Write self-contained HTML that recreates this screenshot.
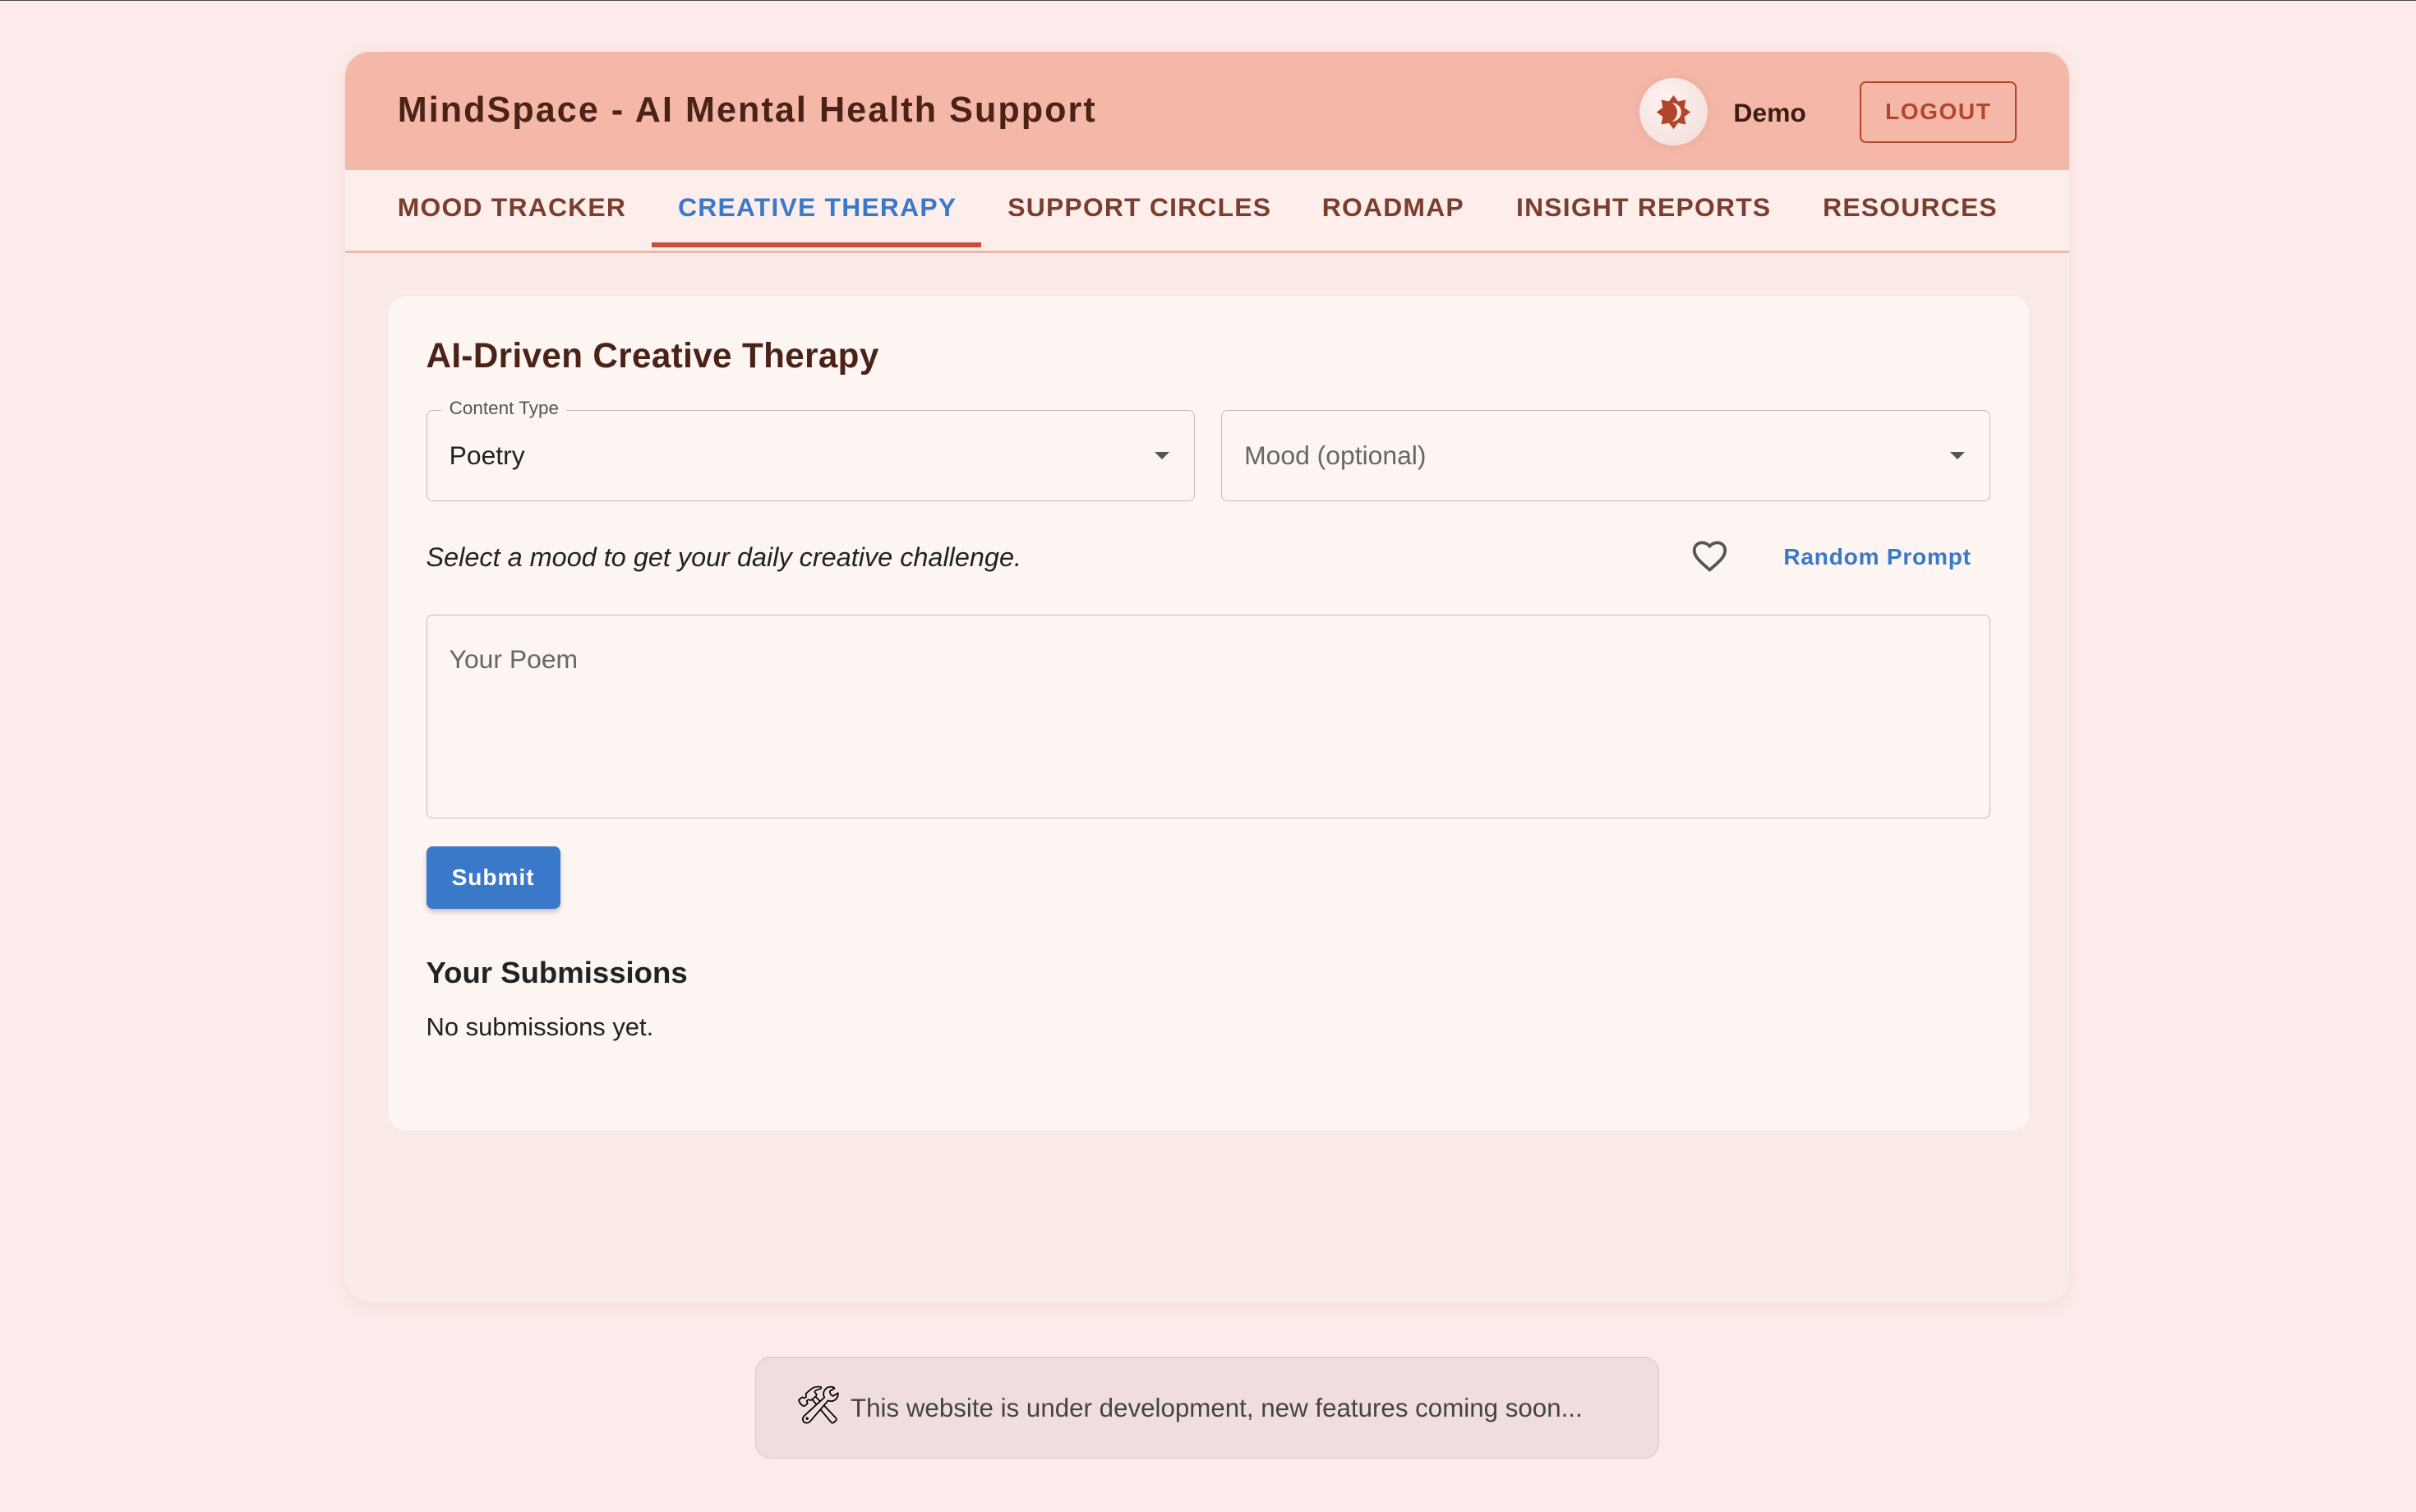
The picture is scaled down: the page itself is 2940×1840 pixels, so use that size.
<!DOCTYPE html>
<html><head><meta charset="utf-8"><style>
html,body{margin:0;padding:0}
body{width:2940px;height:1840px;overflow:hidden;background:#fcebea;font-family:"Liberation Sans",sans-serif}
#w{zoom:1.875;width:1568px;height:981px;position:relative;border-top:1px solid #444;box-sizing:border-box}
.a{position:absolute}
.card{left:224px;top:33px;width:1119px;height:812px;background:#faebe8;border-radius:16px;box-shadow:0 2px 10px rgba(200,140,130,.15);overflow:hidden}
.hdr{left:0;top:0;width:1119px;height:77px;background:#f5b8a8}
.tabs{left:0;top:77px;width:1119px;height:52px;background:#fdeeeb;border-bottom:2px solid #f0b8aa}
.tab{position:absolute;top:91px;font-size:17px;font-weight:bold;letter-spacing:.65px;color:#7a3e2e}
.inner{left:27px;top:158px;width:1066px;height:542px;background:#fdf5f1;border-radius:12px;border:1px solid #f3e4df}
.fld{position:absolute;border:1px solid #c4bcb8;border-radius:4px;box-sizing:border-box}
.arr{position:absolute;width:0;height:0;border-left:5px solid transparent;border-right:5px solid transparent;border-top:5px solid #555}
</style></head><body><div id="w">
<div class="a card">
 <div class="a hdr"></div>
 <div class="a" style="left:34px;top:25px;font-size:23px;font-weight:bold;color:#4a2218;letter-spacing:1.1px">MindSpace - AI Mental Health Support</div>
 <div class="a" style="left:840px;top:17px;width:44px;height:44px;border-radius:50%;background:radial-gradient(circle at 40% 35%,#fdf3f1,#f2dcd8);box-shadow:0 0 6px rgba(230,150,140,.5)"></div>
 <svg class="a" style="left:850px;top:27px" width="24" height="24" viewBox="0 0 24 24"><path fill="#b5442c" d="M12 1l3 4 5 -1 -1 5 4 3 -4 3 1 5 -5 -1 -3 4 -3 -4 -5 1 1 -5 -4 -3 4 -3 -1 -5 5 1z"/><path fill="#fbeeea" d="M11 6a6 6 0 0 1 0 12a7 7 0 0 0 0-12z"/></svg>
 <div class="a" style="left:901px;top:30px;font-size:17px;font-weight:bold;color:#3a1d14">Demo</div>
 <div class="a" style="left:983px;top:19px;width:102px;height:40px;border:1.5px solid #b5442c;border-radius:4px;box-sizing:border-box;color:#b5442c;font-size:15px;font-weight:bold;letter-spacing:.8px;text-align:center;line-height:37px">LOGOUT</div>
 <div class="a tabs"></div>
 <div class="tab" style="left:34px">MOOD TRACKER</div>
 <div class="tab" style="left:216px;color:#3a78c9">CREATIVE THERAPY</div>
 <div class="a" style="left:199px;top:124px;width:214px;height:3px;background:#c8503a"></div>
 <div class="tab" style="left:430px">SUPPORT CIRCLES</div>
 <div class="tab" style="left:634px">ROADMAP</div>
 <div class="tab" style="left:760px">INSIGHT REPORTS</div>
 <div class="tab" style="left:959px">RESOURCES</div>
 <div class="a inner">
  <div class="a" style="left:25px;top:26px;font-size:22.5px;font-weight:bold;color:#4a2218;letter-spacing:.2px">AI-Driven Creative Therapy</div>
  <div class="fld" style="left:25px;top:74px;width:499px;height:59px"></div>
  <div class="a" style="left:35px;top:66px;padding:0 5px;background:#fdf5f1;font-size:12px;color:#555">Content Type</div>
  <div class="a" style="left:40px;top:94px;font-size:17px;color:#222">Poetry</div>
  <div class="arr" style="left:498px;top:101px"></div>
  <div class="fld" style="left:541px;top:74px;width:499px;height:59px"></div>
  <div class="a" style="left:556px;top:94px;font-size:17px;color:#666">Mood (optional)</div>
  <div class="arr" style="left:1014px;top:101px"></div>
  <div class="a" style="left:25px;top:160px;font-size:17.3px;font-style:italic;color:#222">Select a mood to get your daily creative challenge.</div>
  <svg class="a" style="left:846px;top:158px" width="24" height="22" viewBox="0 0 24 22"><path fill="none" stroke="#555" stroke-width="2" d="M12 20l-1.5-1.3C5 14 2 11 2 7.3 2 4.5 4.2 2.3 7 2.3c1.9 0 3.7.9 5 2.3 1.3-1.4 3.1-2.3 5-2.3 2.8 0 5 2.2 5 5 0 3.7-3 6.7-8.5 11.4z"/></svg>
  <div class="a" style="left:906px;top:161px;font-size:15px;font-weight:bold;color:#3a78c9;letter-spacing:.4px">Random Prompt</div>
  <div class="fld" style="left:25px;top:207px;width:1015px;height:132px"></div>
  <div class="a" style="left:40px;top:226px;font-size:17px;color:#666">Your Poem</div>
  <div class="a" style="left:25px;top:357px;width:87px;height:41px;background:#3a78c9;border-radius:4px;color:#fff;font-size:15px;font-weight:bold;text-align:center;line-height:41px;box-shadow:0 2px 3px rgba(0,0,0,.2);letter-spacing:.5px">Submit</div>
  <div class="a" style="left:25px;top:428px;font-size:19.5px;font-weight:bold;color:#222">Your Submissions</div>
  <div class="a" style="left:25px;top:465px;font-size:16.5px;color:#222">No submissions yet.</div>
 </div>
</div>
<div class="a" style="left:490px;top:880px;width:587px;height:66px;background:#efdedd;border:1px solid #d6c8c6;border-radius:10px;box-sizing:border-box"></div>
<div class="a" style="left:516px;top:897px;font-size:24px">🛠</div>
<div class="a" style="left:552px;top:904px;font-size:16.7px;color:#444">This website is under development, new features coming soon...</div>
</div></body></html>
